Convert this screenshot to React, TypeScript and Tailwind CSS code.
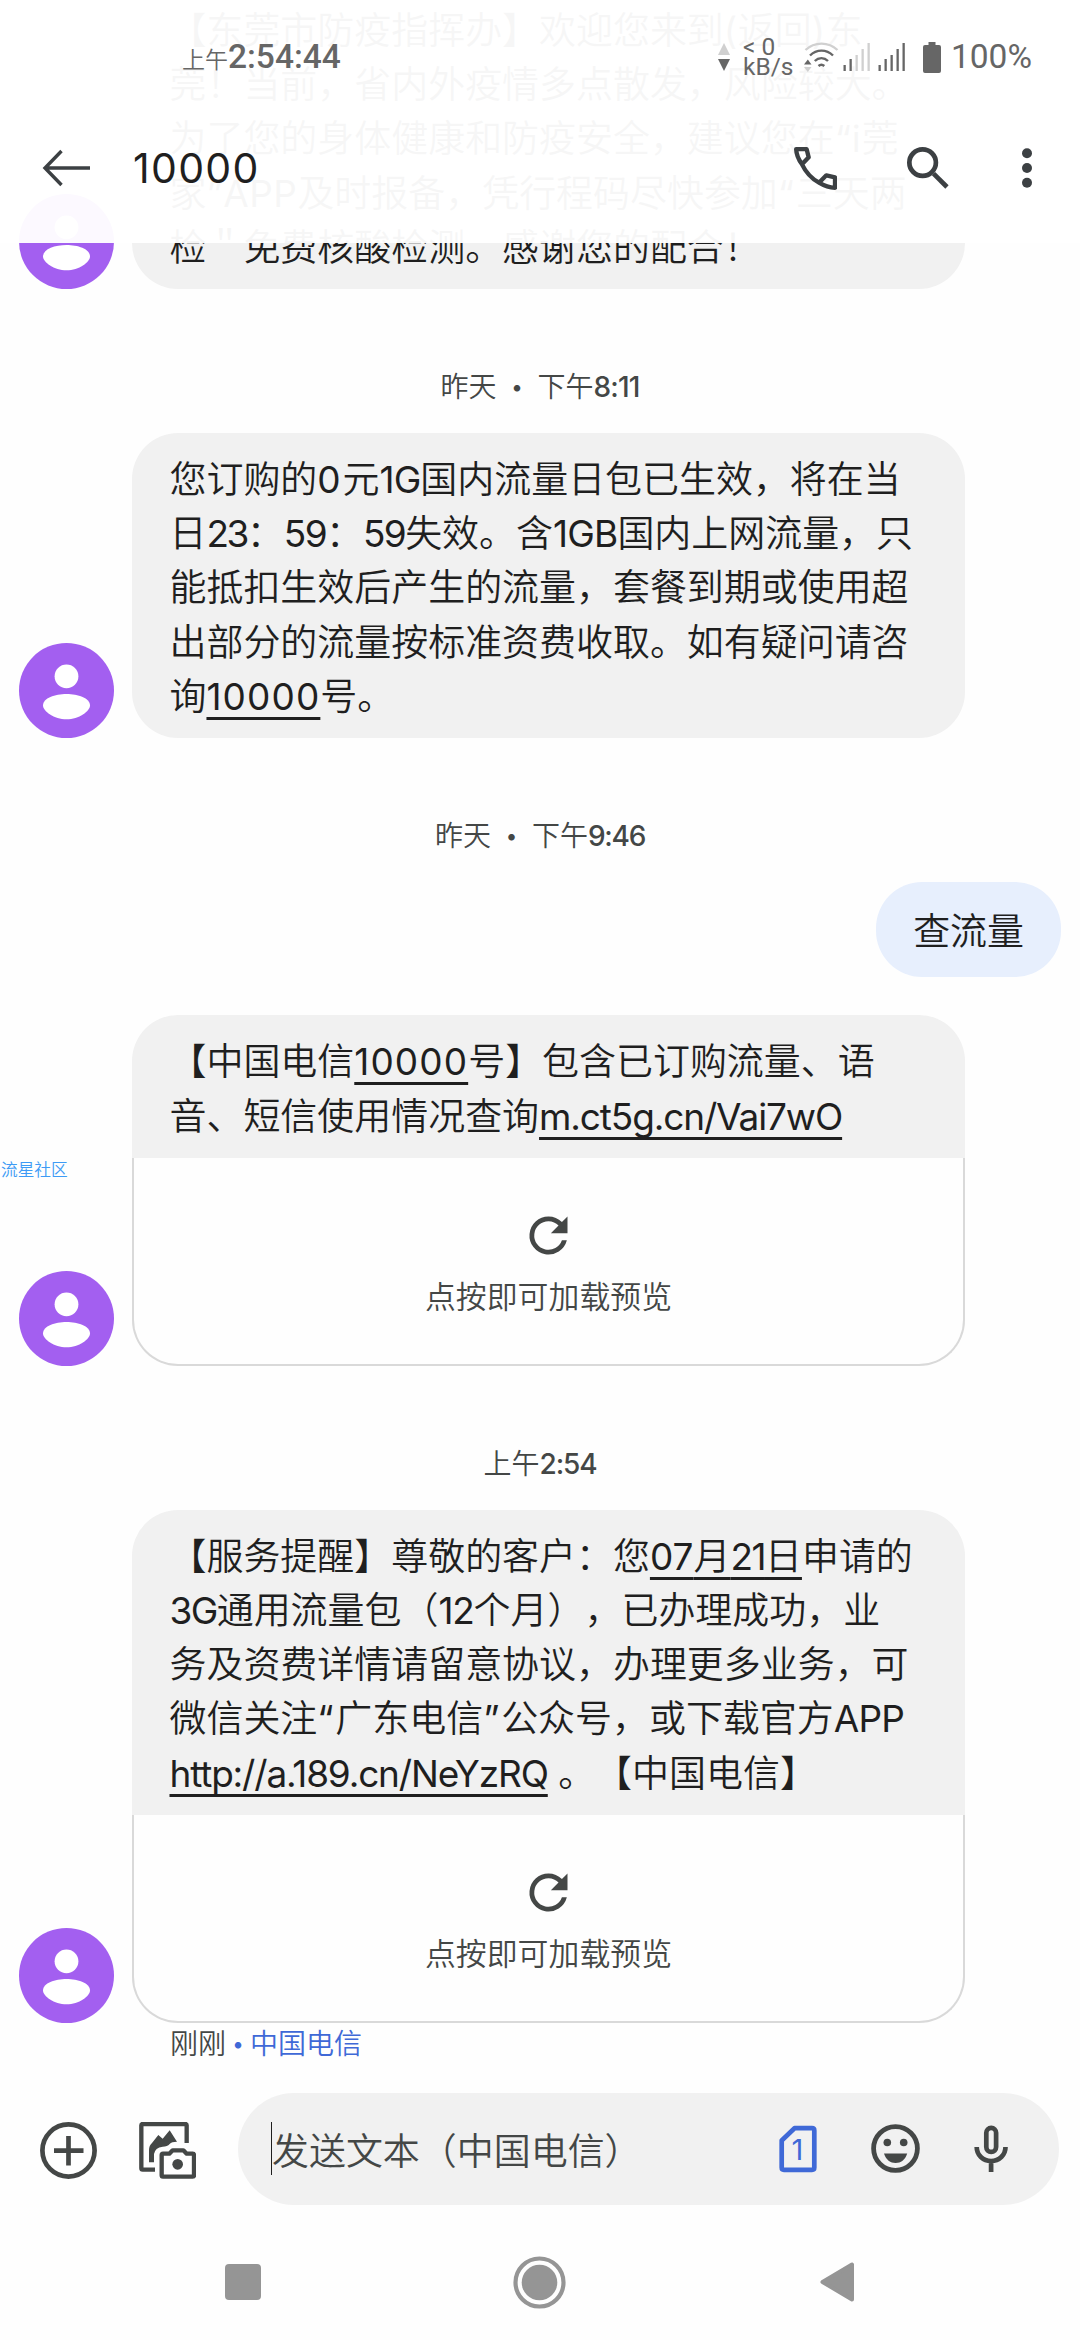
import React from 'react'

interface ChildrenProps {
  children: React.ReactNode
}

function Avatar() {
  return (
    <svg viewBox="0 0 95 95" className="h-[95px] w-[95px] shrink-0">
      <circle cx="47.5" cy="47.5" r="47.5" fill="#a35ff0" />
      <circle cx="47.5" cy="33.3" r="11.9" fill="#fff" />
      <path d="M24 62.5C24 55 36 51 47.5 51S71 55 71 62.5C71 68 60 76.300 47.500 76.300S24 68 24 62.500Z" fill="#fff" />
    </svg>
  )
}

function Message({ children, preview }: ChildrenProps & { preview?: boolean }) {
  return (
    <div className="flex items-end gap-[18px] pl-[19px]">
      <Avatar />
      <div className="w-[833px]">
        <div
          className={
            'bg-[#f1f1f1] pt-[20px] pb-[14px] pl-[37.5px] ' + (preview ? 'rounded-t-[46px]' : 'rounded-[46px]')
          }
        >
          {children}
        </div>
        {preview && (
          <div className="flex h-[208px] flex-col items-center rounded-b-[46px] border-2 border-t-0 border-[#d9d9d9] pt-[49px] text-[#444746]">
            <svg viewBox="0 0 24 24" className="h-[57px] w-[57px]" fill="currentColor">
              <path d="M17.65 6.35A7.96 7.96 0 0 0 12 4a8 8 0 1 0 7.730 10h-2.080A6 6 0 1 1 12 6c1.660 0 3.140.69 4.220 1.780L13 11h7V4l-2.350 2.350z" />
            </svg>
            <div className="mt-[13px] text-[30.900px] leading-[40px]">点按即可加载预览</div>
          </div>
        )}
      </div>
    </div>
  )
}

function Line({ children }: ChildrenProps) {
  return <p className="h-[54.2px] whitespace-nowrap text-[36.960px] leading-[54.2px]">{children}</p>
}

function Link({ children }: ChildrenProps) {
  return (
    <span className="underline decoration-[3px] underline-offset-[6.500px] [text-decoration-skip-ink:none]">
      {children}
    </span>
  )
}

function Stamp({ day, children }: ChildrenProps & { day?: string }) {
  return (
    <div className="flex h-[144px] items-center justify-center pt-[52px] text-[28px] leading-[36px] text-[#444746]">
      {day && (
        <>
          <span>{day}</span>
          <span className="w-[41px] text-center text-[24px]">•</span>
        </>
      )}
      {children}
    </div>
  )
}

function Signal({ level }: { level: number }) {
  const tops = [22, 16, 12, 6, 0]
  return (
    <svg viewBox="0 0 27 28" className="h-[28px] w-[27px]">
      {tops.map((top, i) => (
        <rect key={i} x={0.5 + i * 6} y={top} width="2.3" height={28 - top} fill={i < level ? '#666' : '#d0d0d0'} />
      ))}
    </svg>
  )
}

function StatusBar() {
  return (
    <div className="flex h-[114px] items-center pl-[182px] font-['Roboto','Noto_Sans_CJK_SC',sans-serif] text-[#666]">
      <div className="flex items-baseline">
        <span className="text-[23px]">上午</span>
        <span className="text-[33.500px] font-medium">2:54:44</span>
      </div>
      <div className="ml-auto flex items-center pr-[48px] font-normal">
        <svg viewBox="0 0 12 30" className="h-[30px] w-[12px]">
          <path d="M6 1l6 12H0z" fill="#d0d0d0" />
          <path d="M0 17h12L6 29z" fill="#666" />
        </svg>
        <div className="ml-[13px] flex w-[60px] flex-col text-[24.500px] leading-[20.500px]">
          <span>&lt; 0</span>
          <span>kB/s</span>
        </div>
        <svg viewBox="804 38 36 34" className="h-[34px] w-[36px]" fill="none" strokeWidth="2.400">
          <path d="M806.500 48c9-8.500 23-8.500 32 0" stroke="#d0d0d0" />
          <path d="M811 53.500c6.500-6.500 16.500-6.500 23 0M815.800 59c3.800-3.800 9.400-3.800 13.200 0M819.500 64c1.800-1.600 4-1.600 5.800 0" stroke="#666" />
          <path d="M805 62.500h7.500l-3.700-5z" fill="#666" />
          <path d="M805 65h7.500l-3.700 5z" fill="#d0d0d0" />
        </svg>
        <div className="mr-[18px] ml-[4px] flex gap-[8px]">
          <Signal level={2} />
          <Signal level={5} />
        </div>
        <svg viewBox="0 0 18 31" className="h-[31px] w-[18px]" fill="#666">
          <path d="M5.500 0h7v3H16a2 2 0 0 1 2 2v24a2 2 0 0 1-2 2H2a2 2 0 0 1-2-2V5a2 2 0 0 1 2-2h3.500z" />
        </svg>
        <span className="ml-[10px] text-[33.500px]">100%</span>
      </div>
    </div>
  )
}

function Toolbar() {
  return (
    <div className="flex h-[108px] items-center pl-[42px] text-[#3c4043]">
      <svg viewBox="0 0 48 38" className="h-[38px] w-[48px]" fill="none" stroke="currentColor" strokeWidth="3.400">
        <path d="M48 19H3M19.500 2L3 19l16.500 17" />
      </svg>
      <h1 className="ml-[43px] text-[41px] leading-none font-normal tracking-[1.3px] text-[#1f1f1f]">10000</h1>
      <div className="ml-auto flex items-center pr-[48px]">
        <svg viewBox="42 45 129 129" className="h-[43px] w-[43px]" fill="none" stroke="currentColor" strokeWidth="13" strokeLinejoin="round">
          <path d="M48.500 51.500H80L86 76 66 97C55 82 49 68 48.500 51.500ZM66 97C78 122 92 138 117 152M117 152l22-22 26 6v31.500C148 167 132 161 117 152Z" />
        </svg>
        <svg viewBox="381 45 125 125" className="ml-[70px] h-[42px] w-[42px]" fill="none" stroke="currentColor" strokeWidth="14">
          <circle cx="427.500" cy="91.500" r="39.500" />
          <path d="M460 124l40 40" />
        </svg>
        <svg viewBox="0 0 10 40" className="ml-[73px] h-[40px] w-[10px]" fill="currentColor">
          <circle cx="5" cy="5.300" r="5" />
          <circle cx="5" cy="20" r="5" />
          <circle cx="5" cy="34.700" r="5" />
        </svg>
      </div>
    </div>
  )
}

function ComposeBar() {
  return (
    <div className="flex items-center pt-[29px] pl-[40px] text-[#444746]">
      <svg viewBox="0 0 57 57" className="mt-[3px] h-[57px] w-[57px]" fill="none" stroke="currentColor" strokeWidth="4.700">
        <circle cx="28.500" cy="28.500" r="26.100" />
        <path d="M28.500 14v29.500M14 28.700h29.500" />
      </svg>
      <svg viewBox="327 54 171 171" className="mt-[3px] ml-[42px] h-[57px] w-[57px]" fill="none" stroke="currentColor" strokeWidth="13" strokeLinejoin="round">
        <path d="M470 117V64q0-4-4-4H338q-4 0-4 4v129q0 4 4 4h37" />
        <path d="M357 175v-37q0-13 9-21l19-24 13 11 21-25 22 34q-16 0-22 7-7 8-21 8-23 3-26 22v25z" fill="currentColor" stroke="none" />
        <path d="M395 153q0-4 4-4h19l10-10h32l10 10h18q4 0 4 4v61q0 4-4 4h-89q-4 0-4-4z" />
        <circle cx="443" cy="181" r="16" fill="currentColor" stroke="none" />
      </svg>
      <div className="ml-[42px] flex h-[112px] w-[821px] items-center rounded-full bg-[#f1f1f1] pl-[33px]">
        <span className="h-[53px] w-px bg-[#1f1f1f]" />
        <span className="pt-[6px] text-[36.960px] leading-[54px]">发送文本（中国电信）</span>
        <div className="ml-auto flex items-center pr-[51px]">
          <svg viewBox="0 0 38 48" className="h-[48px] w-[38px]" fill="none">
            <path d="M15.500 3.200H33q2.300 0 2.300 2.300v37q0 2.300-2.300 2.300H5q-2.300 0-2.300-2.300V15.500z" stroke="#3f69d7" strokeWidth="4.700" strokeLinejoin="round" />
            <text x="18.500" y="35" textAnchor="middle" fontSize="29" fill="#3f69d7" className="font-['Inter'] font-normal">1</text>
          </svg>
          <svg viewBox="0 0 49 49" className="ml-[54px] h-[49px] w-[49px]" fill="currentColor">
            <circle cx="24.500" cy="24.500" r="21.900" fill="none" stroke="currentColor" strokeWidth="4.800" />
            <circle cx="16.300" cy="18.500" r="3.800" />
            <circle cx="32.700" cy="18.500" r="3.800" />
            <path d="M13 29.500h23.200C34.200 36 29.800 39 24.600 39S15 36 13 29.500z" />
          </svg>
          <svg viewBox="0 0 34 47" className="ml-[54px] h-[47px] w-[34px]" fill="none" stroke="currentColor" strokeWidth="4.700">
            <rect x="12.300" y="2.900" width="9.800" height="24" rx="4.900" />
            <path d="M2.700 22c0 8 6.300 14 14.400 14s14.400-6 14.400-14M17.100 36v11" />
          </svg>
        </div>
      </div>
    </div>
  )
}

function NavBar() {
  return (
    <div className="flex items-center pt-[51px] pl-[225px]">
      <div className="h-[36px] w-[36px] rounded-[4px] bg-[#959595]" />
      <svg viewBox="0 0 53 53" className="ml-[252px] h-[53px] w-[53px]">
        <circle cx="26.500" cy="26.500" r="24" fill="none" stroke="#959595" strokeWidth="4.200" />
        <circle cx="26.500" cy="26.500" r="17.800" fill="#959595" />
      </svg>
      <svg viewBox="0 0 34 40" className="ml-[254px] h-[40px] w-[34px]" fill="#959595" stroke="#959595" strokeWidth="4" strokeLinejoin="round">
        <path d="M32 2.500v35L2.500 20z" />
      </svg>
    </div>
  )
}

export default function App() {
  return (
    <div className="relative flex h-[2340px] w-[1080px] flex-col overflow-hidden bg-[#fefefe] font-['Inter','Noto_Sans_CJK_SC',sans-serif] font-[350] text-[#1f1f1f] [text-spacing-trim:space-all]">
      <div className="-mt-[16px]">
        <Message>
          <Line>【东莞市防疫指挥办】欢迎您来到<span className="font-normal tracking-[0.5px]">(</span>返回<span className="font-normal tracking-[0.5px]">)</span>东</Line>
          <Line>莞！当前，省内外疫情多点散发，风险较大。</Line>
          <Line>为了您的身体健康和防疫安全，建议您在<span className="font-normal tracking-[0.87px]">“i</span>莞</Line>
          <Line>家<span className="font-normal tracking-[0.49px]">”APP</span>及时报备，凭行程码尽快参加<span className="font-normal tracking-[1.7px]">“</span>三天两</Line>
          <Line>检＂免费核酸检测。感谢您的配合！</Line>
        </Message>
      </div>

      <Stamp day="昨天">
        下午<span className="font-medium tracking-[-0.84px]">8:11</span>
      </Stamp>

      <Message>
        <Line>您订购的<span className="font-normal tracking-[1.9px]">0</span>元<span className="font-normal tracking-[-0.9px]">1G</span>国内流量日包已生效，将在当</Line>
        <Line>日<span className="font-normal tracking-[-2.5px]">23</span>：<span className="font-normal tracking-[-1.6px]">59</span>：<span className="font-normal tracking-[-1.6px]">59</span>失效。含<span className="font-normal tracking-[-0.8px]">1GB</span>国内上网流量，只</Line>
        <Line>能抵扣生效后产生的流量，套餐到期或使用超</Line>
        <Line>出部分的流量按标准资费收取。如有疑问请咨</Line>
        <Line>询<Link><span className="font-normal tracking-[1.12px]">10000</span></Link>号。</Line>
      </Message>

      <Stamp day="昨天">
        下午<span className="font-medium tracking-[-1.29px]">9:46</span>
      </Stamp>

      <div className="mr-[19px] mb-[38.5px] flex h-[95px] items-center self-end rounded-[46px] bg-[#e7effd] px-[37px] pt-[5px] text-[36.960px] leading-[54px]">
        查流量
      </div>

      <Message preview>
        <Line>【中国电信<Link><span className="font-normal tracking-[1.12px]">10000</span></Link>号】包含已订购流量、语</Line>
        <Line>音、短信使用情况查询<Link><span className="font-normal tracking-[-1.12px]">m.ct5g.cn/Vai7wO</span></Link></Line>
      </Message>

      <Stamp>
        上午<span className="font-medium tracking-[-1.11px]">2:54</span>
      </Stamp>

      <Message preview>
        <Line>【服务提醒】尊敬的客户：您<Link><span className="font-normal">07</span>月<span className="font-normal tracking-[-1.5px]">21</span>日</Link>申请的</Line>
        <Line><span className="font-normal tracking-[-1.6px]">3G</span>通用流量包（<span className="font-normal tracking-[-1.2px]">12</span>个月），已办理成功，业</Line>
        <Line>务及资费详情请留意协议，办理更多业务，可</Line>
        <Line>微信关注<span className="font-normal tracking-[1.7px]">“</span>广东电信<span className="font-normal tracking-[1.7px]">”</span>公众号，或下载官方<span className="font-normal tracking-[-0.8px]">APP</span></Line>
        <Line><Link><span className="font-normal tracking-[-1.16px]">http://a.189.cn/NeYzRQ</span></Link> 。【中国电信】</Line>
      </Message>

      <div className="flex h-[41px] items-center pt-[2px] pl-[170px] text-[28px] leading-[36px] text-[#444746]">
        刚刚
        <span className="w-[24px] text-center text-[24px] text-[#3f69d7]">•</span>
        <span className="text-[#3f69d7]">中国电信</span>
      </div>

      <ComposeBar />
      <NavBar />

      {/* floating overlay label */}
      <span className="absolute top-[1159px] left-px text-[16.700px] leading-[22px] text-[#3d9bf5]">流星社区</span>

      <header className="absolute inset-x-0 top-0 h-[243px] bg-white/96">
        <StatusBar />
        <Toolbar />
      </header>
    </div>
  )
}
